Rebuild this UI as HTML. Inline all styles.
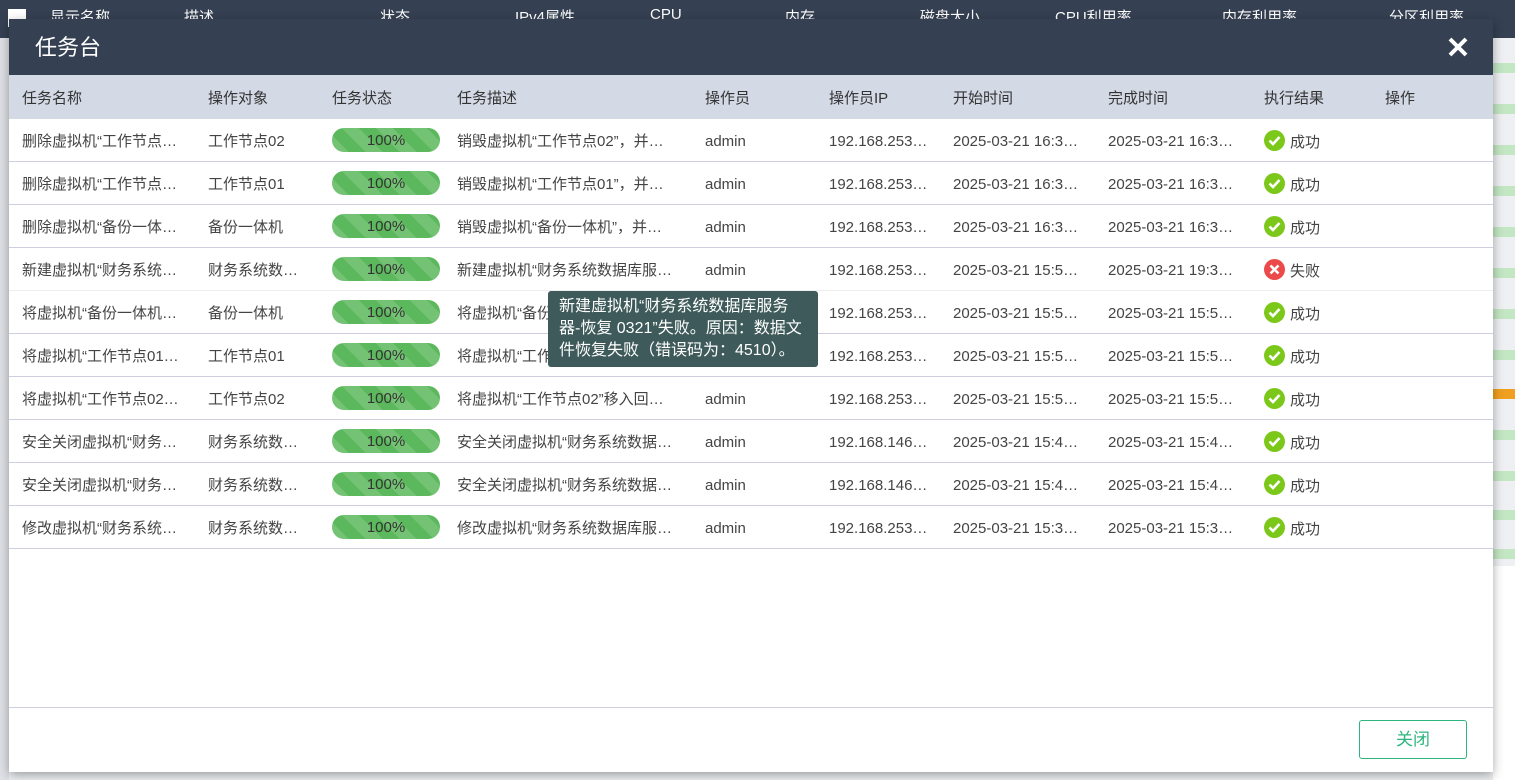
<!DOCTYPE html>
<html><head><meta charset="utf-8"><style>
*{margin:0;padding:0;box-sizing:border-box}
body{width:1515px;height:780px;overflow:hidden;background:#eef0f4;font-family:"Liberation Sans","Noto Sans CJK SC",sans-serif;position:relative}
.topbar{position:absolute;left:0;top:0;width:1515px;height:38px;background:#354052;color:#fff;font-size:15px}
.topbar span{position:absolute;top:6px}
.bgrow{position:absolute;left:1493px;width:22px;height:10px;background:#c3e6c3}
.modal{position:absolute;left:9px;top:19px;width:1484px;height:753px;background:#fff;box-shadow:0 3px 10px rgba(0,0,0,.35)}
.mh{height:56px;background:#354052;color:#fff;font-size:22px;line-height:58px;padding-left:26px;position:relative}
.x{position:absolute;right:24px;top:17px;width:22px;height:22px}
.th{height:44px;background:#d3d9e5;position:relative;font-size:15px;color:#333}
.th span,.r span{position:absolute;white-space:nowrap;top:0}
.th span{line-height:48px}
.r{height:43px;border-bottom:1px solid #cfcde0;position:relative;font-size:15px;color:#444;line-height:45px}
.pb{position:absolute;left:323px;top:9px;width:108px;height:24px;border-radius:12px;background:#5cb85c repeating-linear-gradient(45deg,rgba(255,255,255,.15) 0 12px,transparent 12px 24px);text-align:center;line-height:26px;color:#333;font-size:15px}
.ic{display:inline-block;width:21px;height:21px;border-radius:50%;vertical-align:middle;margin-right:5px;position:relative;top:-3px}
.ok{background:#7cc81a}.no{background:#ec4a4a}
.foot{position:absolute;left:0;top:688px;width:100%;border-top:1px solid #cfcde0}
.btn{position:absolute;left:1350px;top:701px;width:108px;height:39px;border:1px solid #2eb47f;border-radius:3px;color:#2eb47f;font-size:17px;text-align:center;line-height:37px}
.tip{position:absolute;left:548px;top:291px;width:270px;height:76px;background:#3e5a5a;border-radius:3px;color:#fff;font-size:16px;line-height:22px;padding:5px 0 0 11px;white-space:nowrap}
</style></head><body>
<div class="topbar"><span style="left:8px;top:9px;width:18px;height:18px;background:#fff"></span><span style="left:50px">显示名称</span><span style="left:184px">描述</span><span style="left:380px">状态</span><span style="left:515px">IPv4属性</span><span style="left:650px">CPU</span><span style="left:785px">内存</span><span style="left:920px">磁盘大小</span><span style="left:1055px">CPU利用率</span><span style="left:1222px">内存利用率</span><span style="left:1389px">分区利用率</span></div>
<div style="position:absolute;left:0;top:38px;width:9px;height:742px;background:#dfe1e6"></div>
<div class="bgrow" style="top:63px"></div><div class="bgrow" style="top:104px"></div><div class="bgrow" style="top:145px"></div><div class="bgrow" style="top:186px"></div><div class="bgrow" style="top:227px"></div><div class="bgrow" style="top:268px"></div><div class="bgrow" style="top:309px"></div><div class="bgrow" style="top:350px"></div><div class="bgrow" style="top:389px;background:#f0a020"></div><div class="bgrow" style="top:430px"></div><div class="bgrow" style="top:471px"></div><div class="bgrow" style="top:510px"></div><div class="bgrow" style="top:549px"></div>
<div style="position:absolute;left:1493px;top:566px;width:22px;height:214px;background:#fff"></div>
<div class="modal">
<div class="mh">任务台<svg class="x" viewBox="0 0 22 22"><path d="M3 3L19 19M19 3L3 19" stroke="#fff" stroke-width="4"/></svg></div>
<div class="th"><span style="left:13px">任务名称</span><span style="left:199px">操作对象</span><span style="left:323px">任务状态</span><span style="left:448px">任务描述</span><span style="left:696px">操作员</span><span style="left:820px">操作员IP</span><span style="left:944px">开始时间</span><span style="left:1099px">完成时间</span><span style="left:1255px">执行结果</span><span style="left:1376px">操作</span></div>
<div id="rows"></div>
<div class="foot"></div>
<div class="btn">关闭</div>
</div>
<div class="tip">新建虚拟机“财务系统数据库服务<br>器-恢复 0321”失败。原因：数据文<br>件恢复失败（错误码为：4510）。</div>
<script>
var d=[["删除虚拟机“工作节点…","工作节点02","销毁虚拟机“工作节点02”，并…","192.168.253…","2025-03-21 16:3…","2025-03-21 16:3…",1],
["删除虚拟机“工作节点…","工作节点01","销毁虚拟机“工作节点01”，并…","192.168.253…","2025-03-21 16:3…","2025-03-21 16:3…",1],
["删除虚拟机“备份一体…","备份一体机","销毁虚拟机“备份一体机”，并…","192.168.253…","2025-03-21 16:3…","2025-03-21 16:3…",1],
["新建虚拟机“财务系统…","财务系统数…","新建虚拟机“财务系统数据库服…","192.168.253…","2025-03-21 15:5…","2025-03-21 19:3…",0],
["将虚拟机“备份一体机…","备份一体机","将虚拟机“备份一体机”移入回…","192.168.253…","2025-03-21 15:5…","2025-03-21 15:5…",1],
["将虚拟机“工作节点01…","工作节点01","将虚拟机“工作节点01”移入回…","192.168.253…","2025-03-21 15:5…","2025-03-21 15:5…",1],
["将虚拟机“工作节点02…","工作节点02","将虚拟机“工作节点02”移入回…","192.168.253…","2025-03-21 15:5…","2025-03-21 15:5…",1],
["安全关闭虚拟机“财务…","财务系统数…","安全关闭虚拟机“财务系统数据…","192.168.146…","2025-03-21 15:4…","2025-03-21 15:4…",1],
["安全关闭虚拟机“财务…","财务系统数…","安全关闭虚拟机“财务系统数据…","192.168.146…","2025-03-21 15:4…","2025-03-21 15:4…",1],
["修改虚拟机“财务系统…","财务系统数…","修改虚拟机“财务系统数据库服…","192.168.253…","2025-03-21 15:3…","2025-03-21 15:3…",1]];
var h="";
var ok='<svg class="ic ok" viewBox="0 0 21 21"><path d="M5.5 10.5l3.5 3.5 6.5-7" stroke="#fff" stroke-width="2.6" fill="none"/></svg>';
var no='<svg class="ic no" viewBox="0 0 21 21"><path d="M6.5 6.5l8 8M14.5 6.5l-8 8" stroke="#fff" stroke-width="2.6"/></svg>';
d.forEach(function(r,i){h+='<div class="r"'+(i==3?' style="border-bottom-color:#eee"':'')+'><span style="left:13px">'+r[0]+'</span><span style="left:199px">'+r[1]+'</span><div class="pb">100%</div><span style="left:448px">'+r[2]+'</span><span style="left:696px">admin</span><span style="left:820px">'+r[3]+'</span><span style="left:944px">'+r[4]+'</span><span style="left:1099px">'+r[5]+'</span><span style="left:1255px;top:1px">'+(r[6]?ok+'成功':no+'失败')+'</span></div>'});
document.getElementById("rows").innerHTML=h;
</script>
</body></html>
